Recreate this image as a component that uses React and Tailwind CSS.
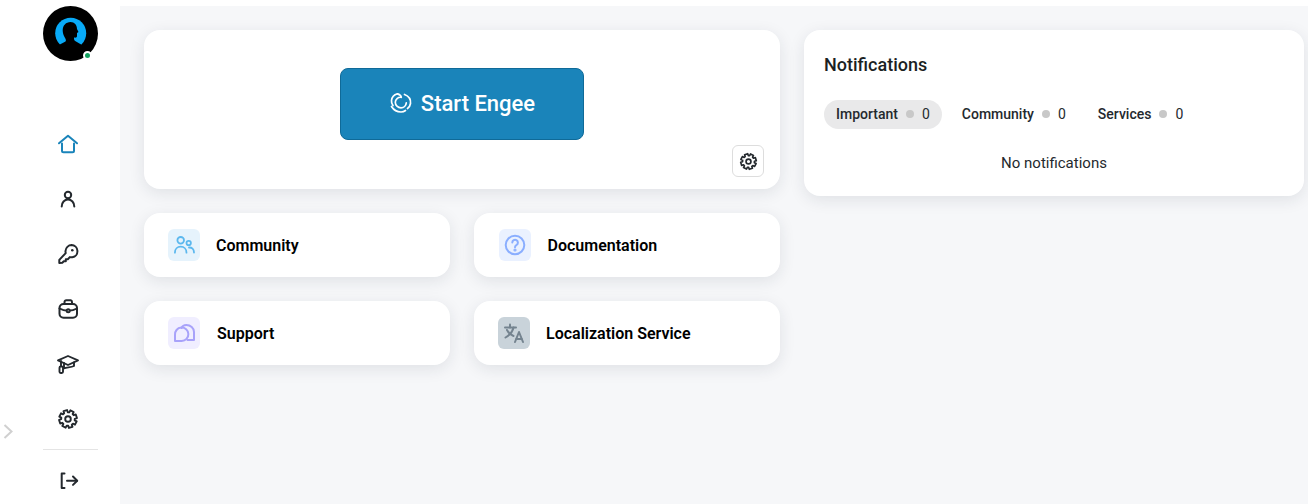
import React from "react";

function Icon({ className = "", size = 24, sw = 2, children }) {
  return (
    <svg
      width={size}
      height={size}
      viewBox="0 0 24 24"
      fill="none"
      stroke="currentColor"
      strokeWidth={sw}
      strokeLinecap="round"
      strokeLinejoin="round"
      className={className}
    >
      {children}
    </svg>
  );
}

// 8 tooth cog outline
function gearPath() {
  const pts = [];
  for (let i = 0; i < 8; i++) {
    const a = (i * Math.PI) / 4 - Math.PI / 8;
    const steps = [
      [a - 0.2, 6.8],
      [a - 0.13, 9],
      [a + 0.13 + 0.16, 9],
      [a + 0.2 + 0.16, 6.8],
    ];
    steps.forEach(([t, r]) => pts.push(`${(12 + r * Math.cos(t)).toFixed(2)} ${(12 + r * Math.sin(t)).toFixed(2)}`));
  }
  return "M" + pts.join("L") + "Z";
}

function GearIcon({ size = 24 }) {
  return (
    <Icon size={size} sw={1.900}>
      <circle cx="12" cy="12" r="2.800" />
      <path d={gearPath()} />
    </Icon>
  );
}

function NavItem({ active, children }) {
  return (
    <div className={`flex h-[55px] w-full items-center justify-center pr-[5px] ${active ? "text-[#1a84ba]" : "text-[#24292e]"}`}>
      {children}
    </div>
  );
}

function Tile({ label, bg, color, pad = "pl-6", gap, children }) {
  return (
    <div className={`flex h-16 flex-1 items-center rounded-2xl bg-white shadow-[0_4px_16px_rgba(30,40,60,0.1)] ${pad}`}>
      <div className={`flex h-8 w-8 items-center justify-center rounded-md ${bg} ${color}`}>{children}</div>
      <span className={`${gap} mt-[2px] text-base leading-6 font-semibold text-black`}>{label}</span>
    </div>
  );
}

function Tab({ label, active, className = "" }) {
  return (
    <div className={`flex h-[29px] items-center rounded-full px-3 pb-[2px] text-sm font-medium text-[#24292e] ${active ? "bg-[#e9e9ea]" : ""} ${className}`}>
      <span>{label}</span>
      <span className="mx-2 h-2 w-2 rounded-full bg-[#c8c8c8]" />
      <span className="font-normal">0</span>
    </div>
  );
}

export default function App() {
  return (
    <div className="flex h-[504px] w-[1308px] overflow-hidden bg-white font-['Roboto',sans-serif]">
      <aside className="relative flex w-[120px] shrink-0 flex-col items-center pt-[6px] pl-[21px]">
        <div className="relative h-[55px] w-[55px]">
          <svg width="55" height="55" viewBox="0 0 55 55">
            <circle cx="27.5" cy="27.5" r="27.5" fill="#000" />
            <circle cx="27.700" cy="27.300" r="15.500" fill="#08aaf7" />
            <path d="M13 41c3-2.500 6.500-3.500 9.500-5.500 1-1 0-3-1-4.500-1-2-1.800-4-1.800-6.500 0-5 3.300-8.500 7.800-8.500 4 0 6.500 3 6.500 7l1.500 3-1.500 1v3c0 1.200-1 2-3 1.500 0 2 0 3 2 4l6 3.500v11H13z" fill="#000" />
          </svg>
          <span className="absolute right-[6px] bottom-[1px] h-[9px] w-[9px] rounded-full border-2 border-white bg-[#12a15e]" />
        </div>

        <nav className="mt-[55px] flex w-full flex-col items-center">
          <NavItem active>
            <Icon>
              <path d="M3 11.300 12 3.700l9 7.600" />
              <path d="M6 11.500v7.300a1.500 1.500 0 0 0 1.500 1.500h9a1.500 1.500 0 0 0 1.500-1.500v-7.300" />
            </Icon>
          </NavItem>
          <NavItem>
            <Icon>
              <circle cx="12" cy="8" r="3.200" />
              <path d="M5.700 19.500c0-4 2.800-7 6.300-7s6.300 3 6.300 7" />
            </Icon>
          </NavItem>
          <NavItem>
            <Icon>
              <path d="M15.500 3a6.200 6.200 0 0 1 .8 12.300c-.8.1-1.700 0-2.500-.2l-2 2.100H9.800v2H7.800l-1.500 1.500-3 .3v-3.100l6.400-6.800c-.2-.7-.3-1.300-.2-2a6.200 6.200 0 0 1 6.200-6z" />
              <circle cx="16.300" cy="8.300" r="1.300" fill="currentColor" stroke="none" />
            </Icon>
          </NavItem>
          <NavItem>
            <Icon>
              <rect x="3.500" y="7" width="17.500" height="13.800" rx="4" />
              <path d="M8.500 7V5a1.800 1.800 0 0 1 1.800-1.800h4.400A1.800 1.800 0 0 1 16 5v2" />
              <path d="M3.500 11.500c2.500 1.500 5.500 2.200 8.700 2.200s6.300-.7 8.800-2.200" />
              <circle cx="12.200" cy="13.700" r="1.500" fill="#fff" />
            </Icon>
          </NavItem>
          <NavItem>
            <Icon sw={1.900}>
              <path d="M12 4 2 8.300l10 4.700 10-4.700z" />
              <path d="M8 11v5.300c3-1 7-1 10-2.300v-3.500" />
              <path d="M5 9v5" />
              <rect x="3.500" y="14.500" width="3.500" height="6.500" rx="1.200" />
            </Icon>
          </NavItem>
          <NavItem>
            <GearIcon />
          </NavItem>
        </nav>

        <div className="mt-[3px] h-px w-[55px] bg-[#e4e4e4]" />
        <div className="mt-[18px] w-[55px] pr-[5px] pl-[1px] text-[#24292e]">
          <Icon className="mx-auto">
            <path d="M7.500 5.500H4.700V20h2.800" />
            <path d="M10 12.700h10" />
            <path d="m16 8.500 4.200 4.200-4.200 4.200" />
          </Icon>
        </div>

        <svg className="absolute top-[424px] left-[3px] text-[#d0d0d0]" width="10" height="15" viewBox="0 0 10 15" fill="none" stroke="currentColor" strokeWidth="2">
          <path d="m1.500 1 7 6.500-7 6.500" />
        </svg>
      </aside>

      <main className="mt-[6px] flex flex-1 items-start gap-6 bg-[#f6f7f9] pt-6 pr-1 pl-6">
        <div className="flex w-[636px] flex-col gap-6">
          <section className="relative flex h-[159px] justify-center rounded-2xl bg-white pt-[38px] shadow-[0_4px_16px_rgba(30,40,60,0.1)]">
            <button className="flex h-[72px] w-[244px] items-center justify-center gap-2 rounded-lg border border-[#0f6a98] bg-[#1a84ba] pb-[2px] text-[22px] font-medium text-white">
              <Icon size={24} sw={1.700}>
                <path d="M8.500 2.800C5 3.800 2.800 6 2.500 9.500c-.2 2 .3 3.500 1.500 5" />
                <path d="M8.500 2.800c2 .4 3.400 1.700 3.800 3.500-3.300-.4-6 2-6 5 0 3 2.500 5.500 5.700 5.500 2.700 0 5-2 5.300-5" />
                <path d="M15.500 3.500c4 1.500 6.500 4.500 6 9-.3 2-1.500 4-3 5" />
                <path d="M2.500 15.500c2 3.200 5 5.500 9.500 5.500 1.500 0 3-.3 4.500-1.500" />
              </Icon>
              Start Engee
            </button>
            <button className="absolute right-4 bottom-3 flex h-8 w-8 items-center justify-center rounded-md border border-[#dddddd] bg-white text-[#24292e]">
              <GearIcon size={21} />
            </button>
          </section>

          <div className="flex gap-6">
            <Tile label="Community" bg="bg-[#e6f3fc]" color="text-[#5cb8ee]" gap="ml-4">
              <Icon sw={1.800}>
                <circle cx="8.700" cy="7.300" r="3.300" />
                <circle cx="16.700" cy="10" r="2.200" />
                <path d="M2.900 19.700c0-3.700 2.500-6 5.800-6s5.800 2.300 5.800 6" />
                <path d="M17 14.500c2.800-.2 5 1.800 5 5" />
              </Icon>
            </Tile>
            <Tile label="Documentation" bg="bg-[#eaf1ff]" color="text-[#8aaeff]" pad="pl-[25px]" gap="ml-[17px]">
              <Icon>
                <circle cx="12" cy="12" r="9.300" />
                <path d="M9.300 9.500a2.800 2.800 0 1 1 4.300 2.400c-1 .6-1.600 1.200-1.600 2.300" />
                <circle cx="12" cy="17" r=".6" fill="currentColor" />
              </Icon>
            </Tile>
          </div>

          <div className="flex gap-6">
            <Tile label="Support" bg="bg-[#f0eeff]" color="text-[#a8a2fa]" gap="ml-[17px]">
              <Icon>
                <path d="M9.500 7c.8-1.900 2.600-3 4.800-3 4.200 0 7.700 3 7.700 7v8h-6.500" />
                <path d="M3 20v-6a6.700 6.700 0 1 1 6.700 6z" />
              </Icon>
            </Tile>
            <Tile label="Localization Service" bg="bg-[#c9d3da]" color="text-[#74838f]" gap="ml-4">
              <Icon>
                <path d="M3 6.500h11" />
                <path d="M8 3.500v3" />
                <path d="M11.500 6.500c-.8 4-3.500 7.500-8 10" />
                <path d="M5 9c1.200 2.500 3.500 4.800 6.500 6" />
                <path d="m13 21 4-10 4 10" />
                <path d="M14.300 18h5.400" />
              </Icon>
            </Tile>
          </div>
        </div>

        <section className="h-[166px] flex-1 rounded-2xl bg-white px-5 pt-[23px] shadow-[0_4px_16px_rgba(30,40,60,0.1)]">
          <h2 className="text-lg leading-6 font-medium text-[#1b1f23]">Notifications</h2>
          <div className="mt-[23px] flex items-center">
            <Tab label="Important" active />
            <Tab label="Community" className="ml-2" />
            <Tab label="Services" className="ml-2" />
          </div>
          <p className="mt-6 text-center text-[15px] leading-5 text-[#24292e]">No notifications</p>
        </section>
      </main>
    </div>
  );
}
